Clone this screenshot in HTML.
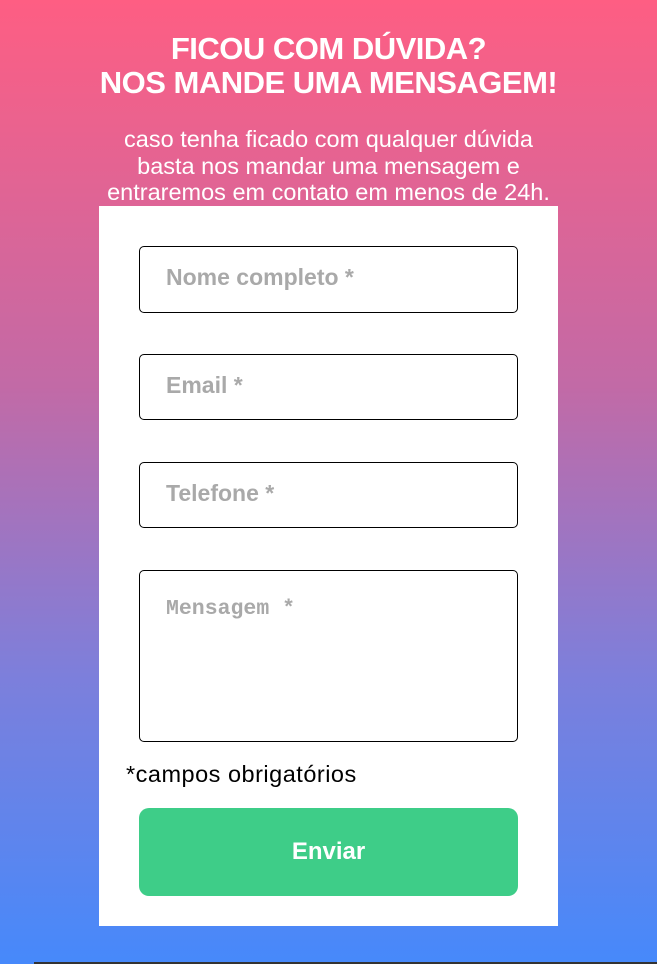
<!DOCTYPE html>
<html><head><meta charset="utf-8"><style>
*{margin:0;padding:0;box-sizing:border-box}
html,body{width:657px;height:964px;overflow:hidden}
body{background:linear-gradient(#fe5e83,#c26aa6 40%,#7d7fdb 70%,#4689fb);font-family:"Liberation Sans",sans-serif;position:relative}
h1{position:absolute;top:32px;left:0;width:657px;text-align:center;color:#fff;font-size:31px;line-height:34px;font-weight:bold;letter-spacing:-0.5px}
.sub{position:absolute;top:126px;left:0;width:657px;text-align:center;color:#fff;font-size:23.5px;line-height:26.5px;white-space:nowrap;letter-spacing:0px}
.card{position:absolute;left:99px;top:206px;width:459px;height:720px;background:#fff}
.in{position:absolute;left:40px;width:379px;border:1px solid #000;border-radius:5px;color:#a9a9a9;font-weight:bold;font-size:23px;padding-left:26px}
.req{position:absolute;left:27px;top:555px;font-size:23.5px;color:#000;letter-spacing:0.5px}
.btn{position:absolute;left:40px;top:602px;width:379px;height:88px;background:#3ecd88;border-radius:10px;color:#fff;font-weight:bold;font-size:24px;text-align:center;line-height:88px}
.line{position:absolute;left:34px;top:962px;width:623px;height:2px;background:#333}
</style></head><body>
<h1>FICOU COM DÚVIDA?<br>NOS MANDE UMA MENSAGEM!</h1>
<div class="sub">caso tenha ficado com qualquer dúvida<br>basta nos mandar uma mensagem e<br>entraremos em contato em menos de 24h.</div>
<div class="card">
<div class="in" style="top:40px;height:67px;line-height:60px">Nome completo *</div>
<div class="in" style="top:148px;height:66px;line-height:60px">Email *</div>
<div class="in" style="top:256px;height:66px;line-height:60px">Telefone *</div>
<div class="in" style="top:364px;height:172px;padding-top:26px;font-family:'Liberation Mono',monospace;font-size:21.5px">Mensagem *</div>
<div class="req">*campos obrigatórios</div>
<div class="btn">Enviar</div>
</div>
<div class="line"></div>
</body></html>
